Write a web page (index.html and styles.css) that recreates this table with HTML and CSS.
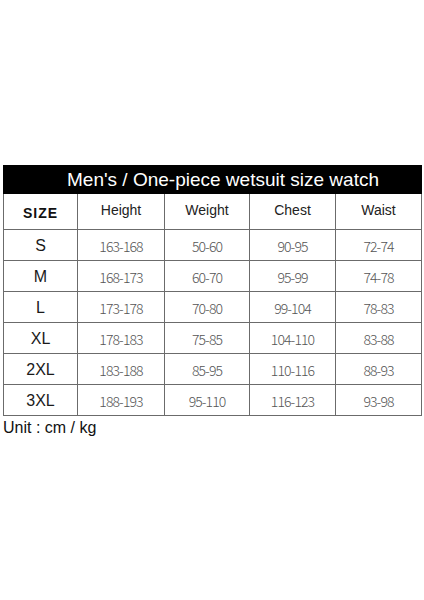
FILE: index.html
```html
<!DOCTYPE html>
<html>
<head>
<meta charset="utf-8">
<link rel="stylesheet" href="styles.css">
</head>
<body>
<div class="page">
  <table class="sizes">
    <colgroup>
      <col class="c1"><col class="c2"><col class="c3"><col class="c4"><col class="c5">
    </colgroup>
    <tr class="title"><th colspan="5"><span>Men's / One-piece wetsuit size watch</span></th></tr>
    <tr class="head">
      <th class="size">SIZE</th><th>Height</th><th>Weight</th><th>Chest</th><th>Waist</th>
    </tr>
    <tr><td class="lbl">S</td><td>163-168</td><td>50-60</td><td>90-95</td><td>72-74</td></tr>
    <tr><td class="lbl">M</td><td>168-173</td><td>60-70</td><td>95-99</td><td>74-78</td></tr>
    <tr><td class="lbl">L</td><td>173-178</td><td>70-80</td><td>99-104</td><td>78-83</td></tr>
    <tr><td class="lbl">XL</td><td>178-183</td><td>75-85</td><td>104-110</td><td>83-88</td></tr>
    <tr><td class="lbl">2XL</td><td>183-188</td><td>85-95</td><td>110-116</td><td>88-93</td></tr>
    <tr><td class="lbl">3XL</td><td>188-193</td><td>95-110</td><td>116-123</td><td>93-98</td></tr>
  </table>
  <p class="unit">Unit : cm / kg</p>
</div>
</body>
</html>
```
FILE: styles.css
```css
html, body {
  margin: 0;
  padding: 0;
  background: #ffffff;
}
.page {
  width: 424px;
  height: 600px;
  padding-top: 165px;
  padding-left: 3px;
  box-sizing: border-box;
}
.sizes {
  border-collapse: collapse;
  table-layout: fixed;
  width: 418px;
}
.c1 { width: 74px; }
.c2 { width: 87px; }
.c3 { width: 85px; }
.c4 { width: 86px; }
.c5 { width: 86px; }
.sizes th, .sizes td {
  border: 1px solid #6b6b6b;
  text-align: center;
  padding: 0;
}
.title th {
  background: #000;
  border-color: #000;
  height: 27px;
  color: #fff;
  font-family: "Liberation Sans", Arial, sans-serif;
  font-weight: normal;
  font-size: 19px;
  line-height: 27px;
}
.title span {
  display: inline-block;
  padding-left: 21px;
}
.head th {
  height: 32px;
  font-family: "Liberation Sans", Arial, sans-serif;
  font-weight: normal;
  font-size: 14px;
  color: #222;
  padding-bottom: 3px;
}
.head th.size {
  font-weight: bold;
  font-size: 14px;
  letter-spacing: 1px;
  color: #111;
  padding-bottom: 0;
  padding-top: 3px;
}
.sizes td {
  height: 28px;
  font-family: "Noto Sans CJK SC", "Noto Sans", sans-serif;
  font-weight: 300;
  font-size: 14px;
  letter-spacing: -0.9px;
  color: #555;
  padding-top: 2px;
}
.sizes td.lbl {
  font-family: "Liberation Sans", Arial, sans-serif;
  font-weight: normal;
  font-size: 16px;
  letter-spacing: 0;
  color: #1a1a1a;
  padding-top: 2px;
}
.unit {
  margin: 3px 0 0 0;
  font-family: "Liberation Sans", Arial, sans-serif;
  font-size: 16px;
  color: #111;
}
```
